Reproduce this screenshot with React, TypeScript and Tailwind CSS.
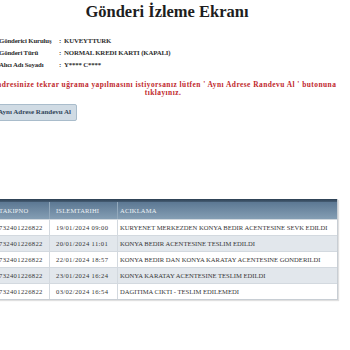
import React from "react";

const rows = [
  ["732401226822", "19/01/2024 09:00", "KURYENET MERKEZDEN KONYA BEDIR ACENTESINE SEVK EDILDI"],
  ["732401226822", "20/01/2024 11:01", "KONYA BEDIR ACENTESINE TESLIM EDILDI"],
  ["732401226822", "22/01/2024 18:57", "KONYA BEDIR DAN KONYA KARATAY ACENTESINE GONDERILDI"],
  ["732401226822", "23/01/2024 16:24", "KONYA KARATAY ACENTESINE TESLIM EDILDI"],
  ["732401226822", "03/02/2024 16:54", "DAGITIMA CIKTI - TESLIM EDILEMEDI"],
];

export default function App() {
  return (
    <div
      className="w-[350px] h-[350px] overflow-hidden bg-white"
      style={{ fontFamily: '"Liberation Serif", "DejaVu Serif", serif' }}
    >
      <div className="ml-[-8px] w-[348px] flex flex-col">
        <h1 className="mt-[1px] text-center text-[16.5px] leading-[22px] font-bold text-[#1e1e1e] pl-[2px]">
          Gönderi İzleme Ekranı
        </h1>
        <div className="mt-[12px] pl-[7px] flex flex-col text-[6.8px] leading-[12px] font-bold tracking-[-0.15px] text-[#2e2e2e]">
          <div className="flex">
            <span className="w-[60px] whitespace-nowrap">Gönderici Kuruluş</span>
            <span className="w-[5px]">:</span>
            <span>KUVEYTTURK</span>
          </div>
          <div className="flex">
            <span className="w-[60px] whitespace-nowrap">Gönderi Türü</span>
            <span className="w-[5px]">:</span>
            <span>NORMAL KREDI KARTI (KAPALI)</span>
          </div>
          <div className="flex">
            <span className="w-[60px] whitespace-nowrap">Alıcı Adı Soyadı</span>
            <span className="w-[5px]">:</span>
            <span>Y**** C****</span>
          </div>
        </div>
        <div className="mt-[10px] flex flex-col items-center text-[7.4px] leading-[7.5px] font-bold tracking-[0.47px] text-[#c0282d] pl-[2px]">
          <div className="whitespace-nowrap">
            adresinize tekrar uğrama yapılmasını istiyorsanız lütfen ' Aynı Adrese Randevu Al ' butonuna
          </div>
          <div className="whitespace-nowrap pr-[8px]">tıklayınız.</div>
        </div>
        <div className="mt-[8px] flex">
          <button className="ml-[0px] h-[17px] px-[5px] bg-[#d0dbe4] border border-[#a9bccb] rounded-[2px] text-[7px] font-bold text-[#34485c] whitespace-nowrap">
            Aynı Adrese Randevu Al
          </button>
        </div>
        <div className="mt-[78px] w-[346px] border-r border-b border-[#c8ced4] shadow-[1px_1px_1px_rgba(0,0,0,0.12)]">
          <div className="h-[3px] bg-gradient-to-b from-[#2c3f52] to-[#465d74]" />
          <div className="flex h-[17px] items-center bg-gradient-to-b from-[#5c7893] to-[#859eb4] text-[6.5px] tracking-[0.2px] text-[#eef2f6]">
            <div className="w-[57px] pl-[7px] h-full flex items-center">TAKIPNO</div>
            <div className="w-[68px] pl-[6px] h-full flex items-center border-l border-[#93a9bc]">ISLEMTARIHI</div>
            <div className="flex-1 pl-[2px] h-full flex items-center border-l border-[#93a9bc]">ACIKLAMA</div>
          </div>
          {rows.map((r, i) => (
            <div
              key={i}
              className={`flex h-[16px] items-center text-[6.6px] text-[#363636] border-t border-[#d3d9df] ${i % 2 === 1 ? "bg-[#e2e7ec]" : "bg-white"}`}
            >
              <div className="w-[57px] pl-[7px] h-full flex items-center tracking-[0.35px]">{r[0]}</div>
              <div className="w-[68px] pl-[6px] h-full flex items-center border-l border-[#d3d9df] tracking-[0.35px]">{r[1]}</div>
              <div className="flex-1 pl-[2px] h-full flex items-center border-l border-[#d3d9df]">{r[2]}</div>
            </div>
          ))}
        </div>
      </div>
    </div>
  );
}
